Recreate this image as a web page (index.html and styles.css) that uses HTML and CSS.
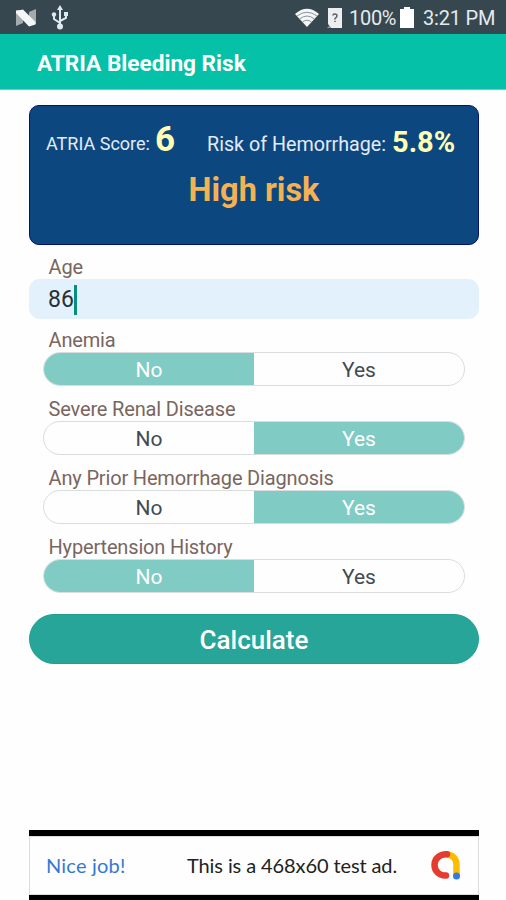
FILE: index.html
```html
<!DOCTYPE html>
<html lang="en">
<head>
<meta charset="UTF-8">
<meta name="viewport" content="width=device-width, initial-scale=1.0">
<title>ATRIA Bleeding Risk</title>
<link rel="stylesheet" href="styles.css">
</head>

<body>
  <div class="status-bar">
    <svg class="icon-n" width="22" height="18" viewBox="0 0 22 18">
      <path d="M1 1H8V14L1 17Z" fill="#a3abaf"/>
      <path d="M14 3L21 0V15L14 13Z" fill="#a3abaf"/>
      <path d="M1 2L8 0.500L20.500 13V15.500L14 17.500L1 4Z" fill="#f4f6f7"/>
    </svg>
    <svg class="icon-usb" width="18" height="26" viewBox="0 0 18 26" fill="none" stroke="#dfeaf0" stroke-width="2">
      <path d="M9 4V21M9 18L3 14V10M9 16L15 13V9"/>
      <path d="M9 0L12 5H6ZM13 7H17V11H13Z" fill="#dfeaf0" stroke="none"/>
      <circle cx="3" cy="9.500" r="2.200" fill="#dfeaf0" stroke="none"/>
      <circle cx="9" cy="21.500" r="3" fill="#dfeaf0" stroke="none"/>
    </svg>
    <svg class="icon-wifi" width="26" height="20" viewBox="0 0 26 20">
      <path d="M1 6Q13 -4.500 25 6L13 19Z" fill="#f4f6f7"/>
      <path d="M3 8Q13 0.500 23 8M5.500 11Q13 5 20.500 11M8.500 14Q13 10.500 17.500 14" fill="none" stroke="#8b959a" stroke-width="1"/>
    </svg>
    <svg class="icon-sim" width="16" height="20" viewBox="0 0 16 20">
      <path d="M1 0H15V20H4L1 16Z" fill="#eceeef"/>
      <path d="M0 20L2 18L4 20Z" fill="#9aa2a6"/>
      <path d="M6 7.500Q6 6 8 6T10 8Q10 9 8 10.500V11.500M8 12.700V14" fill="none" stroke="#59646a" stroke-width="1.500"/>
    </svg>
    <span class="battery-level">100%</span>
    <svg class="icon-battery" width="14" height="21" viewBox="0 0 14 21">
      <path d="M4 0H10V2H14V21H0V2H4Z" fill="#fff"/>
    </svg>
    <span class="clock">3:21 PM</span>
  </div>

  <header class="app-bar">
    <h1>ATRIA Bleeding Risk</h1>
  </header>

  <main class="content">
    <div class="result">
      <div class="result-row">
        <span class="result-label score-label">ATRIA Score:</span>
        <strong class="score">6</strong>
        <span class="result-label risk-label">Risk of Hemorrhage:</span>
        <strong class="percent">5.8%</strong>
      </div>
      <div class="risk-level">High risk</div>
    </div>

    <form class="form">
      <div class="label age-label">Age</div>
      <div class="age-input"><span class="age-value">86</span><span class="caret"></span></div>

      <div class="field">
        <div class="label">Anemia</div>
        <div class="toggle"><span class="option selected">No</span><span class="option">Yes</span></div>
      </div>
      <div class="field">
        <div class="label">Severe Renal Disease</div>
        <div class="toggle"><span class="option">No</span><span class="option selected">Yes</span></div>
      </div>
      <div class="field">
        <div class="label">Any Prior Hemorrhage Diagnosis</div>
        <div class="toggle"><span class="option">No</span><span class="option selected">Yes</span></div>
      </div>
      <div class="field">
        <div class="label">Hypertension History</div>
        <div class="toggle"><span class="option selected">No</span><span class="option">Yes</span></div>
      </div>

      <button type="button" class="calculate">Calculate</button>
    </form>
  </main>

  <footer class="ad">
    <div class="ad-body">
      <span class="ad-title">Nice job!</span>
      <span class="ad-text">This is a 468x60 test ad.</span>
      <svg class="ad-logo" width="32" height="30" viewBox="0 0 32 30" fill="none" stroke-width="6.500" stroke-linecap="round">
        <path d="M17 4.500C23 5 26.500 9 26.500 15V26" stroke="#fbbc04" stroke-linecap="butt"/>
        <path d="M17 4.300C10 3.800 4.500 8.500 4.500 15C4.500 21.500 10 26 16 25.500" stroke="#e43d30"/>
        <circle cx="26.500" cy="26" r="3.500" fill="#347be0" stroke="none"/>
      </svg>
    </div>
  </footer>
</body>
</html>
```

FILE: styles.css
```css
* {
  box-sizing: border-box;
  margin: 0;
  padding: 0;
}

body {
  width: 506px;
  height: 900px;
  display: flex;
  flex-direction: column;
  overflow: hidden;
  background-color: #fefefe;
  font-family: Roboto, sans-serif;
}

.status-bar {
  height: 34px;
  padding: 1px 11px 0 15px;
  display: flex;
  align-items: center;
  background-color: #37474f;
  color: #e4eaed;
  font-size: 20px;
  white-space: nowrap;
}

.icon-usb {
  margin-left: 14px;
}

.icon-wifi {
  margin-left: auto;
}

.icon-sim {
  margin-left: 7px;
}

.battery-level {
  width: 47px;
  margin-left: 6px;
  letter-spacing: -0.3px;
}

.icon-battery {
  margin-left: 4px;
}

.clock {
  width: 72px;
  margin-left: 9px;
  letter-spacing: -0.2px;
}

.app-bar {
  height: 56px;
  padding: 3px 37px 0;
  display: flex;
  align-items: center;
  background-color: #04c1a7;
  border-bottom: 1px solid #5fd5c4;
  color: #fff;
}

.app-bar h1 {
  font-size: 22.6px;
  font-weight: 700;
}

.content {
  flex: 1;
  padding: 15px 27px 0 29px;
}

.result {
  height: 140px;
  padding: 15px 18px 0;
  background-color: #0d477f;
  border: 1px solid #06116b;
  border-radius: 10px;
  white-space: nowrap;
}

.result-row {
  height: 44px;
  margin-left: -2px;
  display: flex;
  align-items: baseline;
}

.result-label {
  color: #e3ebfa;
}

.score-label {
  width: 109px;
  font-size: 18px;
}

.score {
  width: 52px;
  position: relative;
  top: 1px;
  color: #ffffb4;
  font-size: 35px;
  line-height: 36px;
}

.risk-label {
  width: 185px;
  position: relative;
  top: 1px;
  font-size: 19.7px;
}

.percent {
  position: relative;
  top: 2px;
  color: #ffffb4;
  font-size: 29px;
}

.risk-level {
  color: #f5b254;
  font-size: 32.5px;
  font-weight: 700;
  line-height: 50px;
  text-align: center;
}

.label {
  height: 22px;
  padding-left: 19.5px;
  color: #796660;
  font-size: 20px;
  letter-spacing: -0.16px;
  line-height: 22px;
}

.age-label {
  margin-top: 12px;
  line-height: 20px;
}

.age-input {
  height: 40px;
  padding: 1px 0 0 19px;
  display: flex;
  align-items: center;
  background-color: #e3f1fd;
  border-radius: 11px;
  color: #263038;
  font-size: 23px;
}

.caret {
  width: 3px;
  height: 30px;
  background-color: #078e7d;
}

.field {
  height: 69px;
  padding-top: 10px;
}

.toggle {
  width: 422px;
  height: 34px;
  margin: 1px 0 0 14px;
  display: flex;
  overflow: hidden;
  border: 1px solid #d9dddd;
  border-radius: 17px;
}

.option {
  flex: 1;
  color: #414b53;
  font-size: 21px;
  line-height: 35px;
  text-align: center;
}

.selected {
  background-color: #80cbc3;
  color: #fff;
}

.calculate {
  width: 450px;
  height: 50px;
  margin-top: 19px;
  padding-top: 2px;
  background-color: #27a599;
  border: 1px solid #1fa093;
  border-radius: 25px;
  color: #fff;
  font-family: inherit;
  font-size: 26px;
  font-weight: 500;
}

.ad {
  width: 450px;
  height: 70px;
  margin-left: 29px;
  padding: 6px 0 5px;
  background-color: #000;
}

.ad-body {
  height: 59px;
  padding: 0 0 2px 16px;
  display: flex;
  align-items: center;
  background-color: #fefefe;
  border: 1px solid #ddd;
  font-family: Lato, sans-serif;
  font-size: 20px;
  white-space: nowrap;
}

.ad-title {
  width: 141px;
  color: #3478d4;
  letter-spacing: 0.2px;
}

.ad-text {
  width: 243px;
  color: #222;
  letter-spacing: -0.1px;
}
```
